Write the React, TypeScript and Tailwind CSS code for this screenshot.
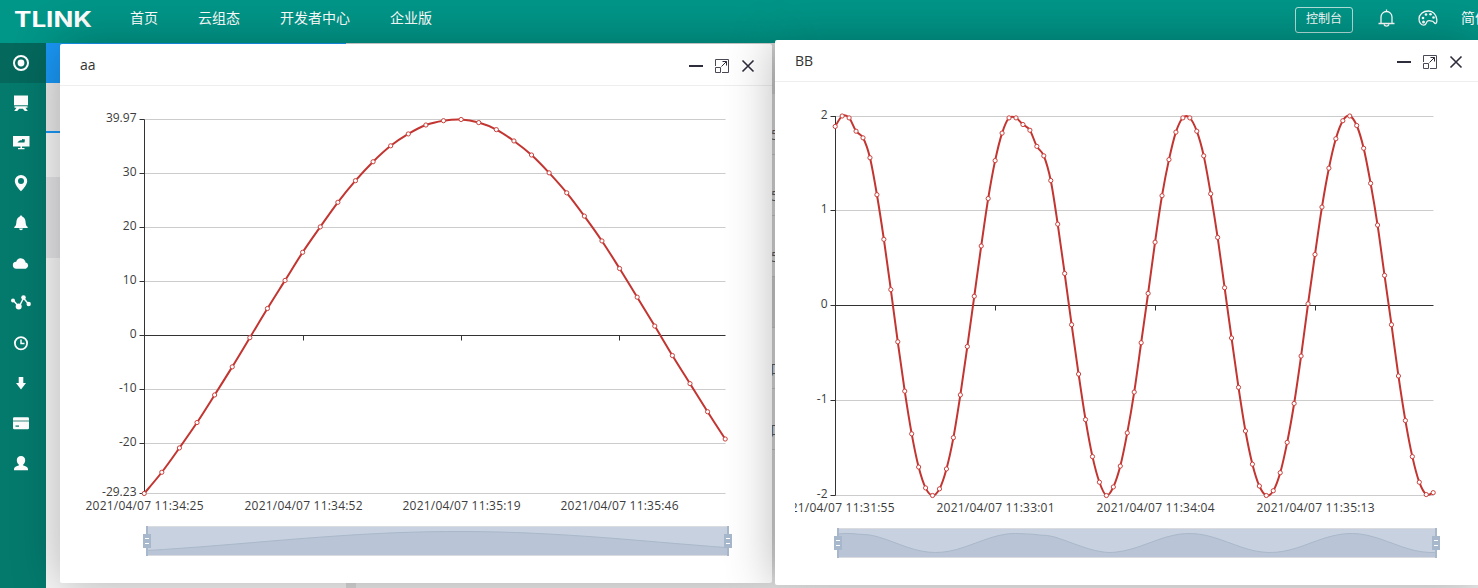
import type { ReactNode } from 'react';
import clsx from 'clsx';

interface Series {
  values: number[];
  min: number;
  max: number;
}

interface AxisLabel {
  at: number;
  text: string;
}

interface TrendChartProps {
  series: Series;
  width: number;
  height: number;
  left: number;
  right: number;
  top: number;
  bottom: number;
  yLabels: AxisLabel[];
  xLabels: AxisLabel[];
}

const SERIES_AA: Series = {
  min: -29.23,
  max: 39.97,
  values: [
    -29.23, -25.3, -20.8, -16.1, -11, -5.8, -0.4, 5, 10.2, 15.4, 20.1, 24.65, 28.65, 32.15, 35.1,
    37.3, 38.95, 39.75, 39.97, 39.4, 38.1, 36, 33.4, 30.1, 26.4, 22.1, 17.5, 12.4, 7.1, 1.75, -3.7,
    -8.9, -14.1, -19.15,
  ],
};

const SERIES_BB: Series = {
  min: -2,
  max: 2,
  values: [
    1.89, 2, 1.98, 1.84, 1.77, 1.56, 1.17, 0.7, 0.17, -0.38, -0.9, -1.35, -1.7, -1.92, -2, -1.93,
    -1.72, -1.39, -0.94, -0.43, 0.1, 0.63, 1.13, 1.53, 1.82, 1.98, 1.98, 1.91, 1.85, 1.68, 1.58,
    1.32, 0.86, 0.34, -0.2, -0.72, -1.2, -1.59, -1.86, -2, -1.91, -1.69, -1.34, -0.91, -0.39, 0.13,
    0.67, 1.16, 1.54, 1.83, 1.98, 1.98, 1.84, 1.58, 1.18, 0.72, 0.19, -0.34, -0.86, -1.32, -1.67,
    -1.9, -2, -1.95, -1.76, -1.44, -1.03, -0.53, 0.02, 0.54, 1.04, 1.45, 1.76, 1.95, 2, 1.9, 1.66,
    1.29, 0.85, 0.32, -0.2, -0.74, -1.21, -1.59, -1.86, -1.99, -1.97,
  ],
};

type Point = [number, number];

function smoothPath(points: Point[]): string {
  let d = `M${points[0][0]} ${points[0][1]}`;
  for (let i = 0; i < points.length - 1; i++) {
    const p0 = points[i - 1] ?? points[i];
    const p1 = points[i];
    const p2 = points[i + 1];
    const p3 = points[i + 2] ?? p2;
    d += ` C${p1[0] + (p2[0] - p0[0]) / 6} ${p1[1] + (p2[1] - p0[1]) / 6}`;
    d += ` ${p2[0] - (p3[0] - p1[0]) / 6} ${p2[1] - (p3[1] - p1[1]) / 6} ${p2[0]} ${p2[1]}`;
  }
  return d;
}

function SliderHandle({ x, y }: { x: number; y: number }) {
  return (
    <g>
      <rect x={x - 1} y={y} width="2" height="30" fill="#a7b7cc" />
      <rect x={x - 4} y={y + 8} width="8" height="14" fill="#a7b7cc" />
      <path d={`M${x - 2} ${y + 12.5}h4M${x - 2} ${y + 17.5}h4`} stroke="#fff" />
    </g>
  );
}

function TrendChart({
  series,
  width,
  height,
  left,
  right,
  top,
  bottom,
  yLabels,
  xLabels,
}: TrendChartProps) {
  const { values, min, max } = series;
  const scale = (v: number, y0: number, y1: number) => y1 - ((v - min) / (max - min)) * (y1 - y0);
  const xAt = (i: number, x0: number, x1: number) => x0 + (i * (x1 - x0)) / (values.length - 1);

  const points = values.map((v, i): Point => [xAt(i, left - 0.3, right - 0.3), scale(v, top, bottom)]);
  const snap = (v: number) => Math.floor(scale(v, top, bottom)) + 0.5;

  const zoomLeft = left + 2.5;
  const zoomRight = right + 2.5;
  const zoomTop = bottom + 32.5;
  const shadow = smoothPath(
    values.map((v, i): Point => [xAt(i, zoomLeft, zoomRight), scale(v, zoomTop + 5.5, zoomTop + 24.5)]),
  );

  return (
    <svg
      width={width}
      height={height}
      className="block overflow-hidden text-[12px] [font-family:'Open_Sans','Noto_Sans',sans-serif]"
    >
      {yLabels.map(({ at, text }) => (
        <g key={text}>
          <path d={`M${left} ${snap(at)}H${right}`} stroke={at === 0 ? '#333' : '#ccc'} />
          <path d={`M${left - 5} ${snap(at)}H${left}`} stroke="#333" />
          <text x={left - 8} y={snap(at) + 2.9} textAnchor="end" fill="#3c3c3c">
            {text}
          </text>
        </g>
      ))}
      <path d={`M${left} ${top}V${bottom}`} stroke="#333" />
      {xLabels.map(({ at, text }, i) => (
        <g key={text}>
          {i > 0 && <path d={`M${at} ${snap(0)}v5`} stroke="#333" />}
          <text x={at} y={bottom + 16.5} textAnchor="middle" textLength="118" fill="#3c3c3c">
            {text}
          </text>
        </g>
      ))}

      <path d={smoothPath(points)} fill="none" stroke="#c23531" strokeWidth="2" />
      {points.map(([x, y]) => (
        <circle key={x} cx={x} cy={y} r="2.1" fill="#fff" stroke="#c8413d" strokeWidth="1" />
      ))}

      <rect x={zoomLeft} y={zoomTop} width={zoomRight - zoomLeft} height="30" fill="#c8d1e0" />
      <path d={`${shadow}V${zoomTop + 30}H${zoomLeft}Z`} fill="#b9c5d6" />
      <path d={shadow} fill="none" stroke="#a9b8ca" />
      <path
        d={`M${zoomLeft} ${zoomTop + 0.5}H${zoomRight}M${zoomLeft} ${zoomTop + 29.5}H${zoomRight}`}
        stroke="#d9dbdf"
      />
      <SliderHandle x={left + 2.5} y={zoomTop} />
      <SliderHandle x={right + 2.5} y={zoomTop} />
    </svg>
  );
}

interface ChartWindowProps {
  title: string;
  className: string;
  children: ReactNode;
}

function ChartWindow({ title, className, children }: ChartWindowProps) {
  return (
    <section
      className={clsx(
        'absolute rounded-[2px] bg-white shadow-[1px_1px_50px_rgba(0,0,0,0.3)]',
        className,
      )}
    >
      <header className="flex h-[42px] items-center justify-between border-b border-[#eee] pr-[17px] pl-5">
        <h2 className="text-sm text-[#333]">{title}</h2>
        <div className="flex gap-3 pt-[3px]">
          <svg width="14" height="14" stroke="#2e2d3c" strokeWidth="2">
            <path d="M0 7h14" />
          </svg>
          <svg width="14" height="14" fill="none" stroke="#4a4956">
            <path d="M.5 7V.5h13v13H7M.5 8.5h5v5h-5z" />
            <path d="M6.5 7.5l5-5M7.5 2.5h4v4" stroke="#2e2d3c" />
          </svg>
          <svg width="14" height="14" fill="none" stroke="#2e2d3c" strokeWidth="1.6">
            <path d="M1.5 1.5l11 11M12.5 1.5l-11 11" />
          </svg>
        </div>
      </header>
      <div className="px-5">{children}</div>
    </section>
  );
}

const SIDE_ICONS: { name: string; icon: ReactNode }[] = [
  {
    name: 'overview',
    icon: (
      <>
        <circle cx="8" cy="8" r="7" fill="none" stroke="currentColor" strokeWidth="2" />
        <circle cx="8" cy="8" r="3.4" />
      </>
    ),
  },
  {
    name: 'device',
    icon: (
      <>
        <path d="M1 .5h14v9.8H1z" />
        <path d="M1.5 11.3h13v1.5h-2l2.300 3.200h-3L9.800 13.800H6.200L4.200 16h-3l2.300-3.200h-2z" />
      </>
    ),
  },
  {
    name: 'screen',
    icon: (
      <>
        <path d="M0 1h16.5v10.5H9V13h2.5v1.2H5V13h2.500v-1.500H0z" />
        <path d="M4.500 7.500c1-1.600 2.500-2.200 4.500-2.200V4l3 .5-.5 3z" fill="#04766a" />
      </>
    ),
  },
  {
    name: 'location',
    icon: (
      <path
        fillRule="evenodd"
        d="M8 0a6.2 6.200 0 0 1 6.200 6.200C14.200 10.200 8 16.300 8 16.300S1.800 10.200 1.800 6.200A6.200 6.200 0 0 1 8 0zm0 3a3 3 0 1 0 0 6 3 3 0 0 0 0-6z"
      />
    ),
  },
  {
    name: 'alarm',
    icon: (
      <path d="M8 .5c.9 0 1.300.6 1.400 1.300C11.500 2.500 12.500 4.500 12.700 8c.1 2 .8 3 2 4v1H1.300v-1c1.200-1 1.900-2 2-4 .2-3.500 1.200-5.500 3.300-6.200C6.700 1.100 7.100.5 8 .5zM6 13.500h4c-.3 1.200-1 1.700-2 1.700s-1.700-.5-2-1.700z" />
    ),
  },
  {
    name: 'cloud',
    icon: (
      <path d="M3.500 13.700a3.500 3.500 0 0 1-.3-7A4.900 4.900 0 0 1 12.200 6c.2.600.2.900.1 1.300a3.300 3.300 0 0 1 .6 6.400z" />
    ),
  },
  {
    name: 'trend',
    icon: (
      <>
        <path d="M0 5l6 7 4.500-9 5 6" fill="none" stroke="currentColor" strokeWidth="1.500" />
        <circle cx="0" cy="5.500" r="2" />
        <circle cx="5.700" cy="11.500" r="3" />
        <circle cx="10.500" cy="2.500" r="2.300" />
        <circle cx="15.700" cy="9" r="2.200" />
      </>
    ),
  },
  {
    name: 'history',
    icon: (
      <g fill="none" stroke="currentColor" strokeWidth="1.800">
        <circle cx="8" cy="8.300" r="6.100" />
        <path d="M8 4.500v4h3.500" strokeWidth="1.500" />
      </g>
    ),
  },
  { name: 'download', icon: <path d="M5.700 2h4.600v6H13l-5 6.500L3 8h2.700z" /> },
  {
    name: 'card',
    icon: (
      <>
        <rect y="2.200" width="16" height="12" rx="1.200" />
        <path d="M0 5h16v2H0z" fill="#9ec6c0" />
        <path d="M2.500 10.500H6v1.200H2.500z" fill="#04766a" />
      </>
    ),
  },
  {
    name: 'user',
    icon: (
      <path d="M8 1c2.600 0 4.200 1.800 4.200 4.200 0 1.800-.8 3.300-2 4.200v1.200C12.500 11.200 15 12.300 15 14v1.200H1V14c0-1.700 2.500-2.800 4.800-3.400V9.400c-1.200-.9-2-2.400-2-4.200C3.800 2.800 5.400 1 8 1z" />
    ),
  },
];

const NAV_ITEMS = ['首页', '云组态', '开发者中心', '企业版'];

function TopBar() {
  return (
    <header className="flex h-[43px] shrink-0 justify-between overflow-hidden bg-[#009688] text-white">
      <div className="flex">
        <svg width="80" height="43" className="ml-[14px]" fill="#fff">
          <text
            x="0"
            y="27"
            textLength="78"
            lengthAdjust="spacingAndGlyphs"
            className="text-[21px] font-bold [font-family:Inter,sans-serif]"
          >
            TLINK
          </text>
        </svg>
        <nav className="ml-9 flex h-9 items-center gap-10 text-sm">
          {NAV_ITEMS.map((item) => (
            <a key={item}>{item}</a>
          ))}
        </nav>
      </div>
      <div className="flex w-[183px] shrink-0">
        <button className="mt-[7px] h-[26px] w-[58px] shrink-0 rounded-[3px] border border-white/70 pb-0.5 text-xs">
          控制台
        </button>
        <svg
          width="18"
          height="18"
          viewBox="0 0 18 18"
          className="mt-[9px] ml-6 shrink-0"
          fill="none"
          stroke="#fff"
          strokeWidth="1.300"
        >
          <path d="M1.500 14.500h16M4 14.500V8a5.500 5.500 0 0 1 11 0v6.500M9.500 2.500V.5M7 15.500a2.600 2.200 0 0 0 5 0" />
        </svg>
        <svg
          width="20"
          height="18"
          viewBox="0 0 20 18"
          className="mt-[9px] ml-[23px] shrink-0"
          fill="none"
          stroke="#fff"
          strokeWidth="1.300"
        >
          <path d="M10.500 2C5 2 1 5.500 1 10c0 3.500 2.200 6.200 4.700 6.200 2.600 0 2.300-2.200 3.300-3.600 1.300-1.800 3.500-.9 5.200-.4 1.500.4 2.200 2.300 3.300 2.300 1 0 1.500-1.700 1.300-4C18.300 5.500 15 2 10.500 2z" />
          <g fill="#fff" stroke="none">
            <circle cx="5" cy="9" r="1.300" />
            <circle cx="8" cy="5.500" r="1.300" />
            <circle cx="12.500" cy="5.300" r="1.300" />
            <circle cx="15.500" cy="8.500" r="1.300" />
            <circle cx="5.500" cy="13" r="1.500" />
          </g>
        </svg>
        <span className="ml-[23px] h-9 shrink-0 text-sm leading-9 whitespace-nowrap">简体</span>
      </div>
    </header>
  );
}

function SideBar() {
  return (
    <aside className="w-[46px] shrink-0 bg-[#047a6d] text-white">
      {SIDE_ICONS.map(({ name, icon }, i) => (
        <div key={name} className={clsx('flex h-10 items-center pl-[13px]', i === 0 && 'bg-[#04685d]')}>
          <svg width="16" height="16" viewBox="0 0 16 16" className="overflow-visible" fill="currentColor">
            {icon}
          </svg>
        </div>
      ))}
    </aside>
  );
}

// Device list and data table that stay mostly hidden under the open windows
function Workspace() {
  return (
    <main className="flex min-w-0 flex-1 overflow-hidden bg-[#dedede] text-sm text-[#666]">
      <div className="w-[300px] shrink-0 bg-[#f8f8f8]">
        <div className="h-10 bg-[#1a98f6]" />
        <div className="h-12 bg-[#eaeaea]" />
        <div className="h-0.5 bg-[#1a98f6]" />
        <div className="h-11" />
        <div className="h-[81px] bg-[#e6e6e9]" />
      </div>
      <div className="ml-2.5 flex-1 bg-[#f0f0f0]">
        <div className="h-[51px] bg-[#e0e0e0]" />
        {['5', '5', '5'].map((value, i) => (
          <div key={i} className="h-[61px] border-b border-[#d6d6d6] pt-[31px] pl-[415px] leading-5">
            {value}
          </div>
        ))}
        <div className="h-[51px] border-b border-[#d6d6d6] bg-[#e2e2e2]" />
        {['口', '口'].map((value, i) => (
          <div key={i} className="h-[61px] border-b border-[#d6d6d6] pt-[31px] pl-[414px] leading-5">
            {value}
          </div>
        ))}
      </div>
    </main>
  );
}

export default function App() {
  return (
    <div className="relative flex h-[588px] w-[1478px] flex-col overflow-hidden [font-family:'Open_Sans','Noto_Sans_CJK_SC',sans-serif]">
      <TopBar />
      <div className="flex min-h-0 flex-1">
        <SideBar />
        <Workspace />
      </div>

      <ChartWindow title="aa" className="top-[44px] left-[60px] h-[539px] w-[712px]">
        <TrendChart
          series={SERIES_AA}
          width={672}
          height={490}
          left={64.5}
          right={645.5}
          top={33.5}
          bottom={407.5}
          yLabels={[
            { at: -29.23, text: '-29.23' },
            { at: -20, text: '-20' },
            { at: -10, text: '-10' },
            { at: 10, text: '10' },
            { at: 20, text: '20' },
            { at: 30, text: '30' },
            { at: 39.97, text: '39.97' },
            { at: 0, text: '0' },
          ]}
          xLabels={[
            { at: 64.5, text: '2021/04/07 11:34:25' },
            { at: 223.5, text: '2021/04/07 11:34:52' },
            { at: 381.5, text: '2021/04/07 11:35:19' },
            { at: 539.5, text: '2021/04/07 11:35:46' },
          ]}
        />
      </ChartWindow>

      <ChartWindow title="BB" className="top-[40px] left-[775px] h-[545px] w-[705px]">
        <TrendChart
          series={SERIES_BB}
          width={665}
          height={495}
          left={40.5}
          right={638.5}
          top={34}
          bottom={413.5}
          yLabels={[
            { at: -2, text: '-2' },
            { at: -1, text: '-1' },
            { at: 1, text: '1' },
            { at: 2, text: '2' },
            { at: 0, text: '0' },
          ]}
          xLabels={[
            { at: 40.5, text: '2021/04/07 11:31:55' },
            { at: 200.5, text: '2021/04/07 11:33:01' },
            { at: 360.5, text: '2021/04/07 11:34:04' },
            { at: 520.5, text: '2021/04/07 11:35:13' },
          ]}
        />
      </ChartWindow>
    </div>
  );
}
